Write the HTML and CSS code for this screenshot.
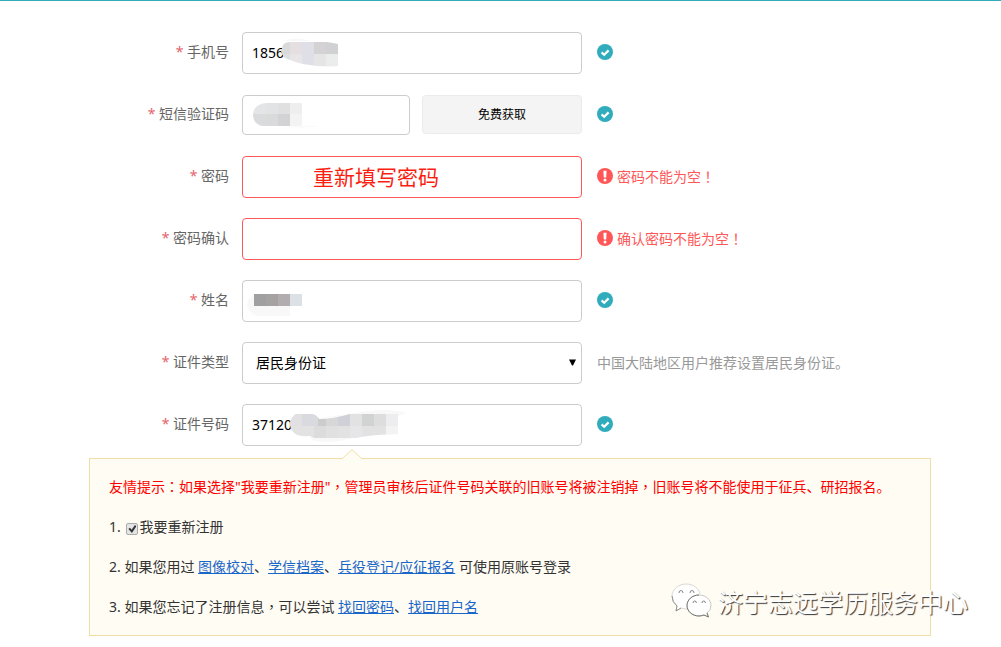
FILE: index.html
```html
<!DOCTYPE html>
<html lang="zh-CN">
<head>
<meta charset="utf-8">
<title>注册</title>
<link rel="stylesheet" href="styles.css">
</head>
<body>
<svg class="defs" aria-hidden="true">
  <symbol id="ok" viewBox="0 0 16 16"><circle cx="8" cy="8" r="8" fill="#30acbc"/><path d="M4.6 8.4 7.2 10.8 11.6 6.4" fill="none" stroke="#fff" stroke-width="2.2"/></symbol>
  <symbol id="bad" viewBox="0 0 16 16"><circle cx="8" cy="8" r="8" fill="#ff5757"/><path d="M6.4 2.8h3.2L9.2 9.6H6.800z" fill="#fff"/><circle cx="8" cy="11.9" r="1.5" fill="#fff"/></symbol>
</svg>
<main class="page">
  <form class="form">
    <div class="row">
      <label class="label" for="phone"><span class="star">*</span> 手机号</label>
      <div class="field">
        <input class="input" id="phone" type="text" value="1856">
        <svg class="mosaic" viewBox="0 0 340 42" aria-hidden="true">
          <clipPath id="c1"><path d="M41 13Q43 10 48 10H85L96 12V34H84Q62 34 48 28Q40 26 39 19Z"/></clipPath>
          <path d="M42 9Q52 4 70 9H42zM72 33H98Q90 37 72 34z" fill="#f8f8f8"/>
          <g clip-path="url(#c1)">
            <path d="M36 10h12v12H36z" fill="#d8dadb"/><path d="M48 10h12v12H48z" fill="#e5dfe2"/><path d="M60 10h12v24H60z" fill="#dedfe7"/><path d="M72 10h12v12H72z" fill="#d4d2d4"/><path d="M84 10h12v12H84z" fill="#d1d0d2"/>
            <path d="M36 22h12v12H36z" fill="#dcdedf"/><path d="M48 22h12v12H48z" fill="#e7e5e8"/><path d="M72 22h12v12H72z" fill="#e5e5e6"/><path d="M84 22h12v12H84z" fill="#ebedec"/>
          </g>
        </svg>
      </div>
      <svg class="icon" role="img" aria-label="正确"><use href="#ok"/></svg>
    </div>
    <div class="row">
      <label class="label" for="code"><span class="star">*</span> 短信验证码</label>
      <div class="field split">
        <input class="input low" id="code" type="text">
        <button class="send" type="button">免费获取</button>
        <svg class="mosaic" viewBox="0 0 340 42" aria-hidden="true">
          <clipPath id="c2"><path d="M24 8H60V31H20Q11 29 11 19Q12 9 24 8Z"/></clipPath>
          <path d="M44 31H78Q64 34 44 32z" fill="#fafafa"/>
          <g clip-path="url(#c2)">
            <path d="M10 7h14v12H10z" fill="#e4e5e6"/><path d="M24 7h12v12H24z" fill="#e2e3e4"/><path d="M36 7h12v12H36z" fill="#e0e0e1"/><path d="M48 7h12v12H48z" fill="#eeeeee"/>
            <path d="M10 19h14v12H10z" fill="#dadbdc"/><path d="M24 19h12v12H24z" fill="#d9dada"/><path d="M36 19h12v12H36z" fill="#d3d3d6"/><path d="M48 19h12v12H48z" fill="#f3f3f3"/>
          </g>
        </svg>
      </div>
      <svg class="icon" role="img" aria-label="正确"><use href="#ok"/></svg>
    </div>
    <div class="row">
      <label class="label" for="pwd"><span class="star">*</span> 密码</label>
      <div class="field">
        <input class="input error" id="pwd" type="password">
        <span class="remark">重新填写密码</span>
      </div>
      <svg class="icon" aria-hidden="true"><use href="#bad"/></svg>
      <span class="message">密码不能为空<span class="mid" lang="zh-TW">！</span></span>
    </div>
    <div class="row">
      <label class="label" for="pwd2"><span class="star">*</span> 密码确认</label>
      <div class="field"><input class="input error" id="pwd2" type="password"></div>
      <svg class="icon" aria-hidden="true"><use href="#bad"/></svg>
      <span class="message">确认密码不能为空<span class="mid" lang="zh-TW">！</span></span>
    </div>
    <div class="row">
      <label class="label" for="name"><span class="star">*</span> 姓名</label>
      <div class="field">
        <input class="input" id="name" type="text">
        <svg class="mosaic" viewBox="0 0 340 42" aria-hidden="true">
          <path d="M12 14Q5 18 5 26H12zM6 26H48V36H18Q8 36 6 26z" fill="#f9f8f9"/>
          <path d="M12 14h12v12H12z" fill="#a09fa1"/><path d="M24 14h12v12H24z" fill="#a5a2a1"/><path d="M36 14h12v12H36z" fill="#b1acaf"/><path d="M48 14h12v12H48z" fill="#dce1e5"/>
        </svg>
      </div>
      <svg class="icon" role="img" aria-label="正确"><use href="#ok"/></svg>
    </div>
    <div class="row">
      <label class="label" for="type"><span class="star">*</span> 证件类型</label>
      <div class="field">
        <select class="input select" id="type"><option>居民身份证</option></select>
        <svg class="caret" viewBox="0 0 7 7" aria-hidden="true"><path d="M0 0.500h7L4 6.500H3z"/></svg>
      </div>
      <span class="hint">中国大陆地区用户推荐设置居民身份证。</span>
    </div>
    <div class="row">
      <label class="label" for="idno"><span class="star">*</span> 证件号码</label>
      <div class="field">
        <input class="input" id="idno" type="text" value="37120">
        <svg class="mosaic" viewBox="0 0 340 42" aria-hidden="true">
          <clipPath id="c3"><path d="M54 10H70Q75 11 77 15Q92 15 108 10H156V30Q136 30 112 34H72L68 32Q50 34 48 21Q48 14 54 10Z"/></clipPath>
          <path d="M76 14Q108 10 126 7Q150 4 164 9L156 12H110zM68 33H115Q88 41 70 36z" fill="#f8f8f8"/>
          <g clip-path="url(#c3)">
            <path d="M48 8h108v28H48z" fill="#e2e2e3"/>
            <path d="M48 8h12v14H48z" fill="#e2e0e2"/><path d="M60 8h16v14H60z" fill="#d9dae0"/><path d="M76 8h8v14h-8z" fill="#cdcbcb"/><path d="M84 8h12v14H84z" fill="#d8d7d8"/><path d="M96 8h12v14H96z" fill="#d0d0d8"/><path d="M120 8h12v14h-12z" fill="#d1d3d3"/><path d="M132 8h12v14h-12z" fill="#dddddd"/><path d="M144 8h12v14h-12z" fill="#ededef"/>
            <path d="M72 22h12v14H72z" fill="#dcdcdd"/><path d="M84 22h12v14H84z" fill="#e1e0e1"/><path d="M108 22h12v14h-12z" fill="#e6e5e7"/><path d="M144 22h12v14h-12z" fill="#f3f3f3"/>
          </g>
        </svg>
      </div>
      <svg class="icon" role="img" aria-label="正确"><use href="#ok"/></svg>
    </div>
    <section class="notice">
      <svg class="tip" viewBox="0 0 18 10" aria-hidden="true"><path d="M0 10 0 9 9 0.500 18 9V10z" fill="#fffcf3"/><path d="M0 9 9 0.500 18 9" fill="none" stroke="#f0dfa5"/></svg>
      <p class="line warn">友情提示<span class="mid" lang="zh-TW">：</span>如果选择"我要重新注册"<span class="mid" lang="zh-TW">，</span>管理员审核后证件号码关联的旧账号将被注销掉<span class="mid" lang="zh-TW">，</span>旧账号将不能使用于征兵、研招报名。</p>
      <p class="line">1. <input class="check" id="again" type="checkbox" checked><label for="again">我要重新注册</label></p>
      <p class="line">2. 如果您用过 <a href="#">图像校对</a>、<a href="#">学信档案</a>、<a href="#">兵役登记/应征报名</a> 可使用原账号登录</p>
      <p class="line">3. 如果您忘记了注册信息<span class="mid" lang="zh-TW">，</span>可以尝试 <a href="#">找回密码</a>、<a href="#">找回用户名</a></p>
      <div class="mark">
        <svg class="wechat" viewBox="0 0 42 36" aria-hidden="true">
          <g fill="#fff" stroke-width="0.900">
            <path d="M17 26Q13 26 10 25L5 28L6 23Q1 19 1 13C1 6 8 1 15 1C22 1 28 5 29 11" stroke="#d5d4cd"/>
            <path d="M1 13Q1 19 6 23L5 28L10 25" fill="none" stroke="#888883"/>
            <path d="M28 12C35 12 40 17 40 22.500Q40 27 36 30L37.500 34L33 32Q30 33 28 33C21 33 16 28 16 22.500C16 17 21 12 28 12Z" stroke="#c0bfb9"/>
            <path d="M28 12C21 12 16 17 16 22.500C16 28 21 33 28 33Q30 33 33 32L37.500 34L36 30" fill="none" stroke="#6d6d69"/>
            <path d="M8 10q0-2.500 2-2.500t2 2.500M19 10q0-2.500 2-2.500t2 2.500M22 20q0-2 1.700-2t1.700 2M31 20q0-2 1.700-2t1.700 2" fill="none" stroke="#777"/>
          </g>
        </svg>
        <span>济宁志远学历服务中心</span>
      </div>
    </section>
  </form>
</main>
</body>
</html>
```
FILE: styles.css
```css
* { box-sizing: border-box; }
body {
  margin: 0;
  background: #fff;
  color: #333;
  font: 14px/20px "Noto Sans", "Noto Sans CJK SC", sans-serif;
}
.defs { position: absolute; width: 0; height: 0; }
.page { border-top: 1px solid #30acbc; }
.form {
  display: flex;
  flex-direction: column;
  gap: 20px;
  padding: 31px 70px 11px 89px;
}
.row { display: flex; align-items: center; min-height: 42px; }
.label {
  width: 140px;
  margin-right: 13px;
  padding-bottom: 2px;
  text-align: right;
  color: #666;
}
.star { color: #e66469; }
.field { position: relative; width: 340px; margin-right: 15px; }
.split { display: flex; gap: 12px; }
.input {
  display: block;
  width: 100%;
  height: 42px;
  padding: 0 9px 2px;
  border: 1px solid #ccc;
  border-radius: 4px;
  background: #fff;
  color: #000;
  font: inherit;
}
.input.low { width: 168px; height: 40px; }
.input.error { border-color: #ff5757; }
.input.select { appearance: none; padding: 0 13px; }
.send {
  flex: 1;
  height: 39px;
  border: 1px solid #ebebeb;
  border-radius: 4px;
  background: #f4f4f4;
  color: #000;
  font: inherit;
  font-size: 12px;
}
.mosaic {
  position: absolute;
  top: 0;
  left: 0;
  width: 340px;
  height: 42px;
  pointer-events: none;
}
.caret { position: absolute; right: 6px; top: 17px; width: 7px; height: 7px; }
.remark {
  position: absolute;
  left: 71px;
  top: 6px;
  font-size: 21px;
  line-height: 30px;
  color: #fb1e10;
}
.icon { flex: none; width: 16px; height: 16px; margin-bottom: 2px; }
.message { margin-left: 4px; color: #ff5757; }
.hint { color: #999; }
.mid { font-family: "Noto Sans", "Noto Sans CJK TC", sans-serif; }
.notice {
  position: relative;
  margin-top: -8px;
  padding: 8px 19px;
  border: 1px solid #f0dfa5;
  background: #fffcf3;
}
.tip { position: absolute; left: 253px; top: -10px; width: 18px; height: 10px; }
.line { margin: 0; line-height: 40px; }
.warn { color: #f00; }
.line a { color: #1a66c8; text-decoration: underline; }
.check {
  appearance: none;
  display: inline-grid;
  place-items: center;
  width: 12px;
  height: 12px;
  margin: 0 1px 0 2px;
  vertical-align: -1px;
  border: 1px solid #aaa;
  border-radius: 2px;
  background: #e4e4e4;
}
.check:checked::before {
  content: "";
  width: 8px;
  height: 8px;
  background: #333;
  clip-path: polygon(0 50%, 20% 35%, 40% 60%, 82% 0, 100% 15%, 44% 100%);
}
.mark {
  position: absolute;
  right: -38px;
  bottom: 13px;
  display: flex;
  align-items: center;
  gap: 5px;
  font-size: 25px;
  line-height: 40px;
  color: #fff;
  text-shadow: 1px 1px 1px #333;
}
.wechat { width: 42px; height: 36px; margin-bottom: 2px; }
```
